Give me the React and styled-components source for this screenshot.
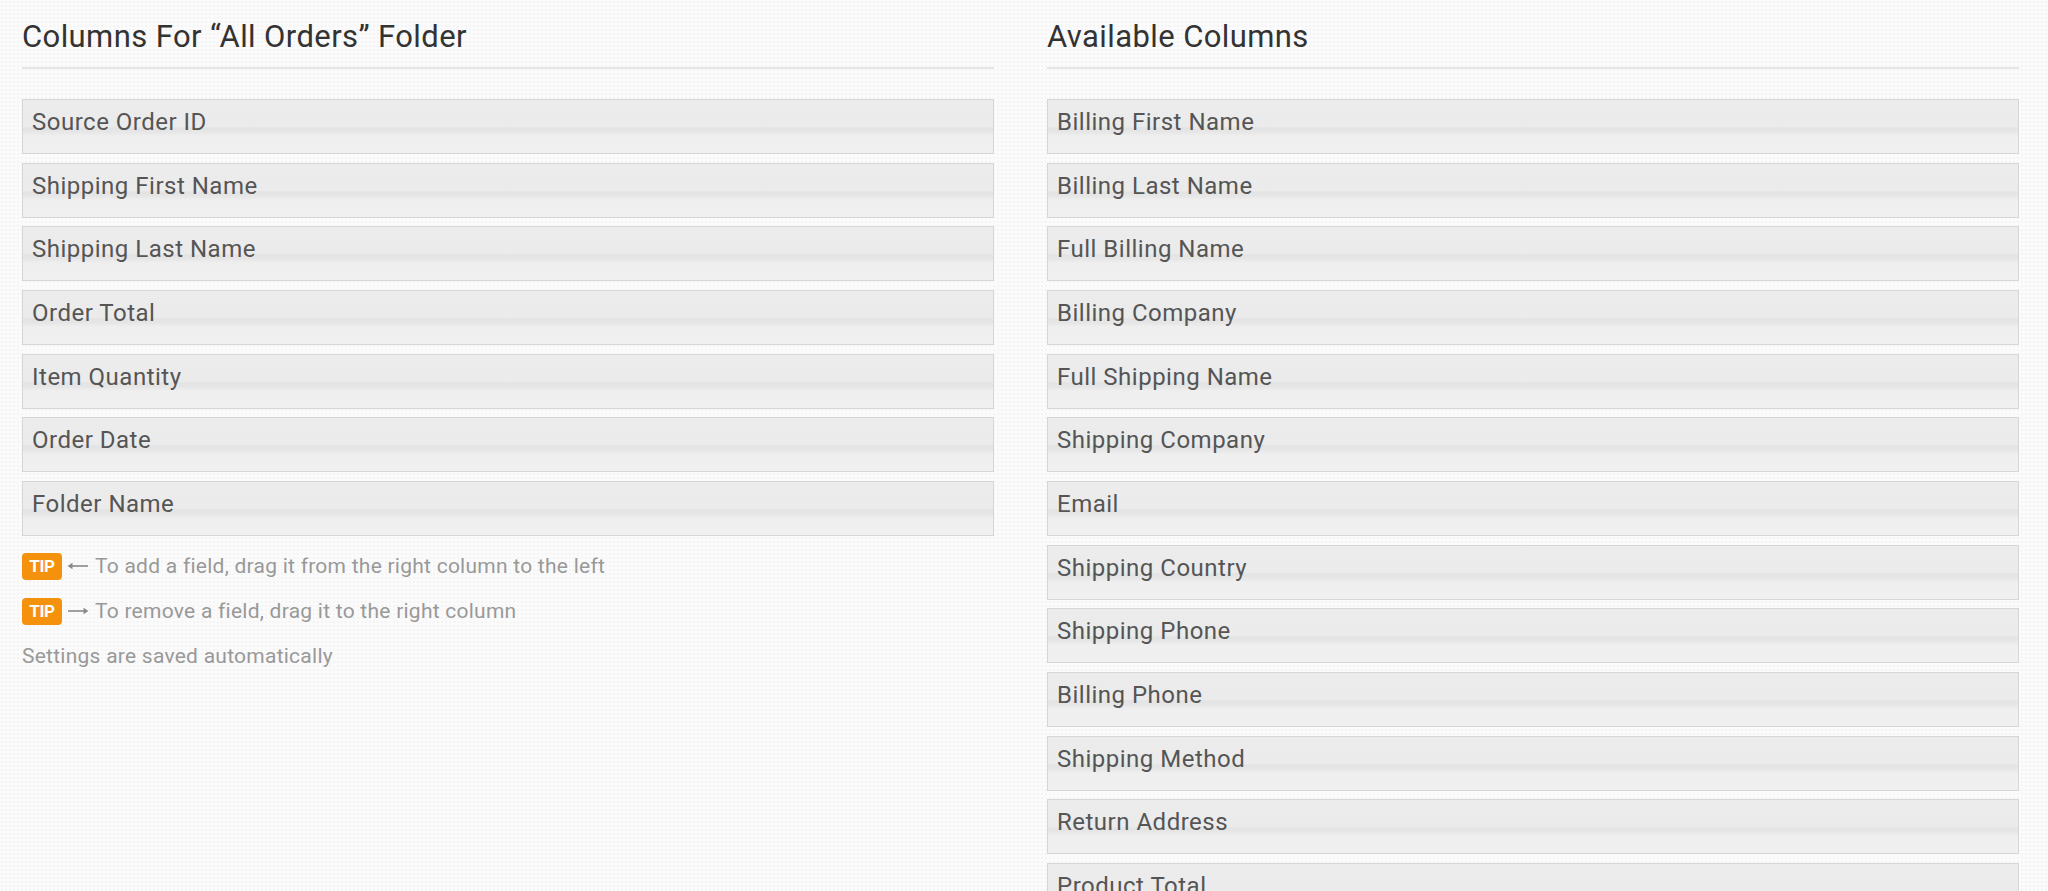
import React from 'react'
import styled, { createGlobalStyle } from 'styled-components'

const GlobalStyle = createGlobalStyle`
    html, body {
        margin: 0;
        padding: 0;
    }
    body {
        font-family: Roboto, "Liberation Sans", Arial, sans-serif;
        background-color: #fbfbfb;
        background-image: radial-gradient(#f4f4f4 0.7px, transparent 1px);
        background-size: 4px 4px;
        overflow: hidden;
    }
`

const current = [
    'Source Order ID',
    'Shipping First Name',
    'Shipping Last Name',
    'Order Total',
    'Item Quantity',
    'Order Date',
    'Folder Name',
]

const available = [
    'Billing First Name',
    'Billing Last Name',
    'Full Billing Name',
    'Billing Company',
    'Full Shipping Name',
    'Shipping Company',
    'Email',
    'Shipping Country',
    'Shipping Phone',
    'Billing Phone',
    'Shipping Method',
    'Return Address',
    'Product Total',
]

const Arrow = ({ dir }) => (
    <svg width="22" height="10" viewBox="0 0 22 10">
        {dir === 'left' ? (
            <>
                <line x1="3" y1="5" x2="21" y2="5" stroke="#8a8a8a" strokeWidth="1.6" />
                <path d="M0.5 5 L5.5 1.8 L5.5 8.2 Z" fill="#8a8a8a" />
            </>
        ) : (
            <>
                <line x1="1" y1="5" x2="19" y2="5" stroke="#8a8a8a" strokeWidth="1.6" />
                <path d="M21.5 5 L16.5 1.8 L16.5 8.2 Z" fill="#8a8a8a" />
            </>
        )}
    </svg>
)

const App = () => {
    return (
        <>
            <GlobalStyle />
            <Page>
                <Column>
                    <Header>
                        <h1>Columns For “All Orders” Folder</h1>
                    </Header>
                    <List>
                        {current.map(name => <Field key={name}>{name}</Field>)}
                    </List>
                    <Tips>
                        <Tip>
                            <Badge>TIP</Badge>
                            <Arrow dir="left" />
                            <span>To add a field, drag it from the right column to the left</span>
                        </Tip>
                        <Tip>
                            <Badge>TIP</Badge>
                            <Arrow dir="right" />
                            <span>To remove a field, drag it to the right column</span>
                        </Tip>
                        <Note>Settings are saved automatically</Note>
                    </Tips>
                </Column>
                <Column>
                    <Header>
                        <h1>Available Columns</h1>
                    </Header>
                    <List>
                        {available.map(name => <Field key={name}>{name}</Field>)}
                    </List>
                </Column>
            </Page>
        </>
    )
}

const Page = styled.div`
    display: grid;
    grid-template-columns: 972px 972px;
    column-gap: 53px;
    padding: 0 29px 0 22px;
`

const Column = styled.div`
    display: flex;
    flex-direction: column;
`

const Header = styled.div`
    margin-top: 19px;
    padding-bottom: 13px;
    border-bottom: 2px solid #e6e6e6;
    h1{
        margin: 0;
        font-size: 31px;
        font-weight: 400;
        line-height: 35px;
        color: #333;
        letter-spacing: 0.4px;
    }
`

const List = styled.div`
    display: flex;
    flex-direction: column;
    gap: 8.67px;
    margin-top: 30px;
`

const Field = styled.div`
    box-sizing: border-box;
    height: 55px;
    padding: 9px 9px 0;
    border: 1.5px solid #d6d6d6;
    background: linear-gradient(to bottom, #ececec 0%, #ebebeb 50%, #e3e3e3 53%, #e6e6e6 60%, #efefef 68%, #f0f0f0 100%);
    font-size: 24px;
    line-height: 27px;
    letter-spacing: 0.5px;
    color: #555;
`

const Tips = styled.div`
    display: flex;
    flex-direction: column;
    margin-top: 17px;
    color: #999;
    font-size: 21px;
    letter-spacing: 0.25px;
`

const Tip = styled.div`
    display: flex;
    align-items: center;
    gap: 5px;
    height: 27px;
    margin-bottom: 18px;
    svg{
        margin: 0 1px 0 0;
    }
`

const Badge = styled.span`
    display: inline-flex;
    align-items: center;
    justify-content: center;
    width: 40px;
    height: 27px;
    border-radius: 4px;
    background: #f5920d;
    color: #fff;
    font-size: 17px;
    font-weight: 700;
    letter-spacing: -0.3px;
`

const Note = styled.p`
    margin: 0;
    line-height: 27px;
`

export default App
